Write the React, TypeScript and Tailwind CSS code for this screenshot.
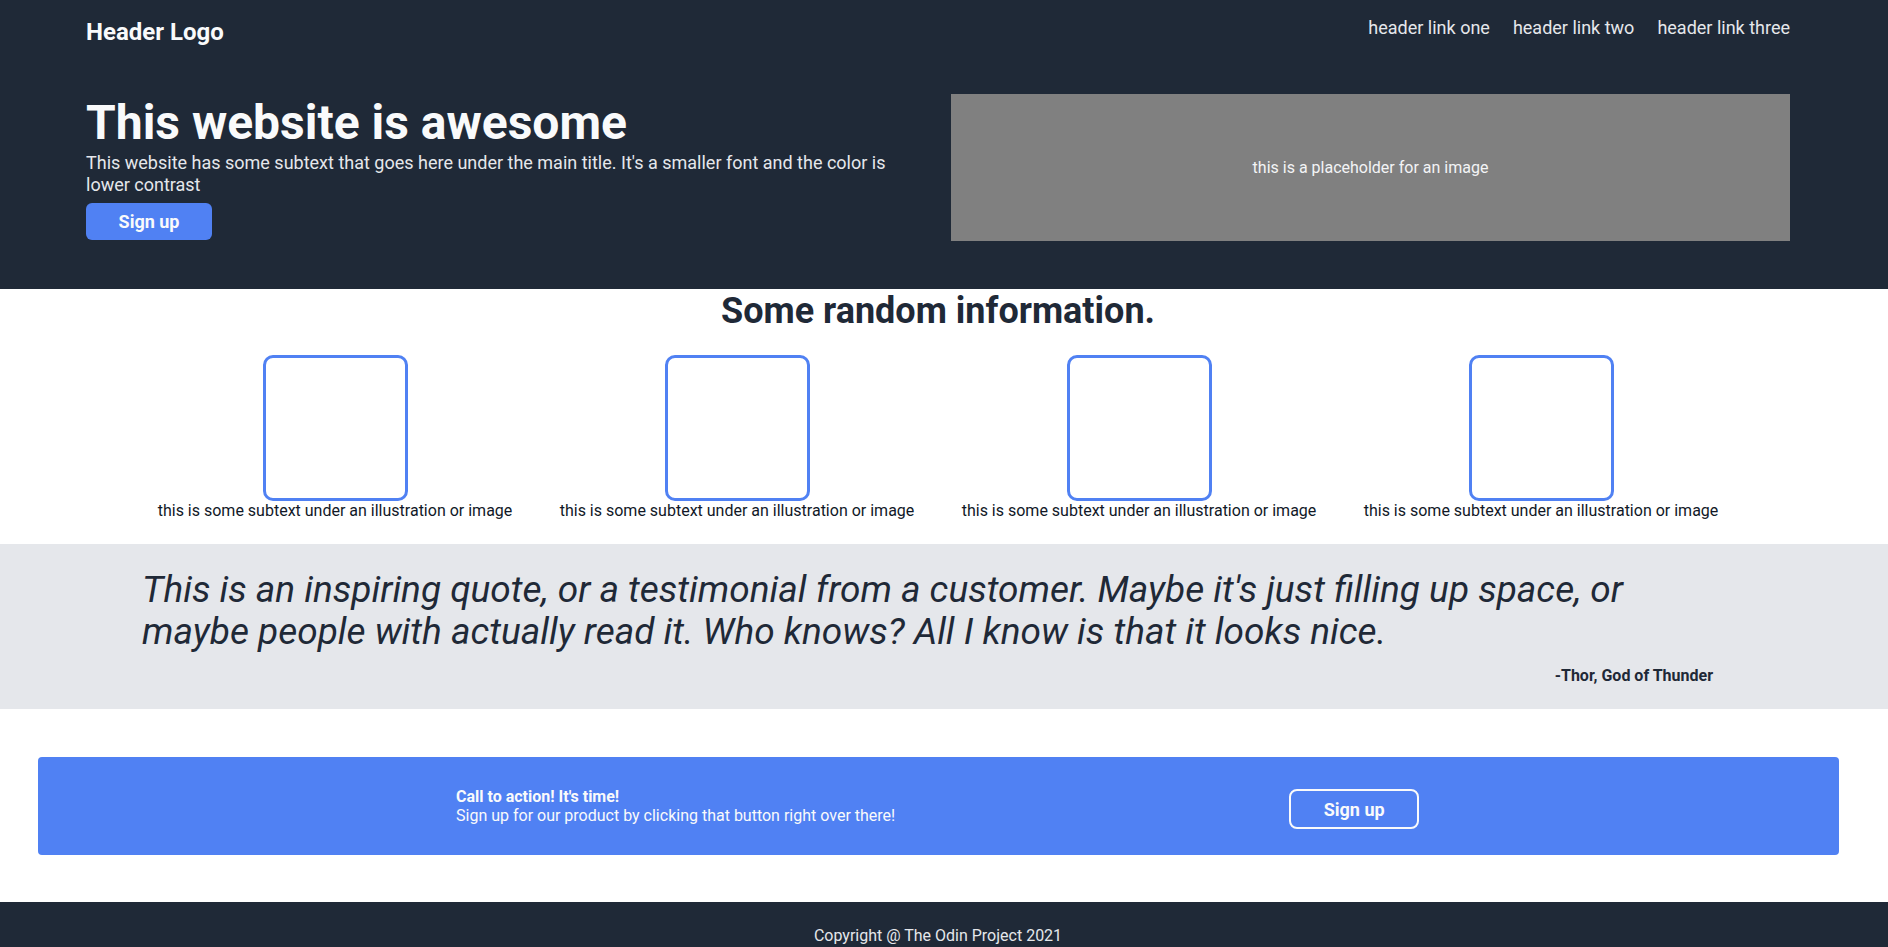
import React from "react";

const features = [1, 2, 3, 4];

const App = () => {
  return (
    <div className="font-['Roboto',sans-serif] bg-white">
      {/* top section */}
      <section className="bg-[#1f2937] pl-[86px] pr-[98px] pb-[48px]">
        <nav className="flex items-start justify-between pt-[17px]">
          <div className="mt-[1px] text-2xl leading-[28px] font-bold text-[#f9fafb]">Header Logo</div>
          <ul className="flex gap-[23px] text-[18px] leading-[21px] text-[#e5e7eb]">
            <li>header link one</li>
            <li>header link two</li>
            <li>header link three</li>
          </ul>
        </nav>
        <div className="mt-[48px] flex items-center gap-[26px]">
          <div className="flex-1">
            <h1 className="text-5xl leading-[56px] font-bold text-[#f9fafb]">This website is awesome</h1>
            <p className="mt-[1px] text-[18px] leading-[22px] text-[#e5e7eb]">
              This website has some subtext that goes here under the main title. It's a smaller font and the color is
              lower contrast
            </p>
            <button className="mt-[7px] w-[126px] h-[37px] rounded-md bg-[#5081f3] text-[18px] font-bold text-[#f9fafb]">
              Sign up
            </button>
          </div>
          <div className="flex-1 h-[147px] bg-[#808080] flex items-center justify-center text-base text-[#f3f4f6]">
            this is a placeholder for an image
          </div>
        </div>
      </section>

      {/* info section */}
      <section className="pr-[12px] pb-[24px] pt-[1px]">
        <h2 className="text-center text-4xl leading-[42px] font-bold text-[#1f2937]">Some random information.</h2>
        <div className="mt-[23px] flex justify-center gap-[47px]">
          {features.map((f) => (
            <div key={f} className="w-[355px] flex flex-col items-center">
              <div className="w-[145px] h-[146px] rounded-[10px] border-[3px] border-[#5081f3]" />
              <p className="text-base leading-[19px] text-[#111827] whitespace-nowrap">
                this is some subtext under an illustration or image
              </p>
            </div>
          ))}
        </div>
      </section>

      {/* quote */}
      <section className="bg-[#e5e7eb] pl-[142px] pr-[175px] pt-[25px] pb-[24px]">
        <p className="max-w-[1540px] text-[37px] leading-[42px] font-normal italic text-[#1f2937]">
          This is an inspiring quote, or a testimonial from a customer. Maybe it's just filling up space, or maybe people
          with actually read it. Who knows? All I know is that it looks nice.
        </p>
        <p className="mt-[13px] text-right text-base leading-[19px] font-bold text-[#1f2937]">-Thor, God of Thunder</p>
      </section>

      {/* call to action */}
      <section className="pl-[38px] pr-[49px] pt-[48px] pb-[47px]">
        <div className="h-[98px] rounded bg-[#5081f3] flex items-center pl-[418px] gap-[394px]">
          <div className="text-base leading-[19px] text-[#f9fafb]">
            <p className="font-bold">Call to action! It's time!</p>
            <p>Sign up for our product by clicking that button right over there!</p>
          </div>
          <button className="mt-[6px] w-[130px] h-[40px] rounded-lg border-2 border-[#f9fafb] text-[18px] font-bold text-[#f9fafb]">
            Sign up
          </button>
        </div>
      </section>

      <footer className="bg-[#1f2937] pr-[12px] pt-[24px] pb-[24px] text-center text-base leading-[19px] text-[#e5e7eb]">
        Copyright @ The Odin Project 2021
      </footer>
    </div>
  );
};

export default App;
